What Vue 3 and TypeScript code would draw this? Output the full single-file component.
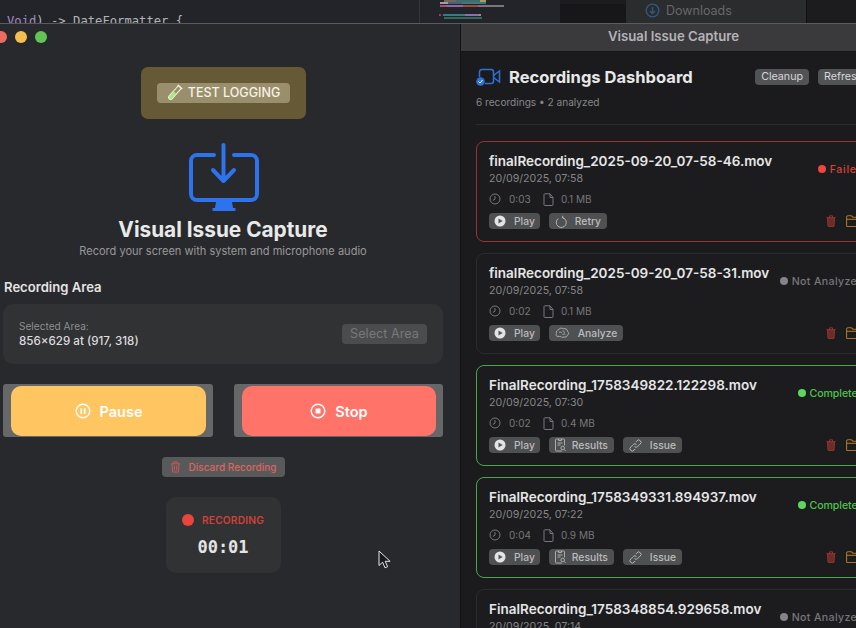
<script setup lang="ts">
interface Recording {
  name: string
  date: string
  duration: string
  size: string
  status: 'failed' | 'none' | 'done'
  statusText: string
  actions: { kind: string; label: string }[]
}

const play = { kind: 'play', label: 'Play' }
const results = { kind: 'results', label: 'Results' }
const issue = { kind: 'issue', label: 'Issue' }

const recordings: Recording[] = [
  {
    name: 'finalRecording_2025-09-20_07-58-46.mov',
    date: '20/09/2025, 07:58',
    duration: '0:03',
    size: '0.1 MB',
    status: 'failed',
    statusText: 'Failed',
    actions: [play, { kind: 'retry', label: 'Retry' }],
  },
  {
    name: 'finalRecording_2025-09-20_07-58-31.mov',
    date: '20/09/2025, 07:58',
    duration: '0:02',
    size: '0.1 MB',
    status: 'none',
    statusText: 'Not Analyzed',
    actions: [play, { kind: 'analyze', label: 'Analyze' }],
  },
  {
    name: 'FinalRecording_1758349822.122298.mov',
    date: '20/09/2025, 07:30',
    duration: '0:02',
    size: '0.4 MB',
    status: 'done',
    statusText: 'Completed',
    actions: [play, results, issue],
  },
  {
    name: 'FinalRecording_1758349331.894937.mov',
    date: '20/09/2025, 07:22',
    duration: '0:04',
    size: '0.9 MB',
    status: 'done',
    statusText: 'Completed',
    actions: [play, results, issue],
  },
  {
    name: 'FinalRecording_1758348854.929658.mov',
    date: '20/09/2025, 07:14',
    duration: '0:03',
    size: '0.5 MB',
    status: 'none',
    statusText: 'Not Analyzed',
    actions: [play, { kind: 'analyze', label: 'Analyze' }],
  },
]

// minimap lines in the window behind: x, y, width, colour
const minimap = [
  [24, 0, 12, '#6d6a5c'], [36, 0, 24, '#3f6e6a'], [60, 0, 6, '#a89a60'],
  [20, 2, 8, '#a0a0a0'], [28, 2, 14, '#5a5a70'], [42, 2, 24, '#3f7a78'],
  [20, 5, 7, '#b04a70'], [27, 5, 16, '#8a6ab0'], [43, 5, 15, '#a04848'], [58, 5, 26, '#77777a'],
  [19, 14, 2, '#a03a60'], [23, 14, 22, '#3a7a80'], [45, 14, 14, '#8a70b0'], [59, 14, 2, '#a09060'],
  [24, 17, 38, '#2f6a60'],
] as const
</script>

<template>
  <div class="stage">
    <!-- window behind -->
    <div class="behind">
      <div class="code"><span class="kw">Void</span>) -&gt; DateFormatter {</div>
      <svg class="minimap" width="140" height="23" viewBox="0 0 140 23">
        <rect v-for="(m, i) in minimap" :key="i" :x="m[0]" :y="m[1]" :width="m[2]" height="2" :fill="m[3]" />
      </svg>
      <div class="behind-dark"></div>
      <div class="downloads">
        <svg width="15" height="15" viewBox="0 0 15 15" fill="none" stroke="#2f5a86" stroke-width="1.3">
          <circle cx="7.5" cy="7.5" r="6.3" />
          <path d="M7.5 4v6.5M5 8l2.500 2.500L10 8" />
        </svg>
        <span>Downloads</span>
      </div>
    </div>

    <div class="windows">
      <!-- recorder window -->
      <section class="recorder">
        <div class="lights">
          <i class="red"></i><i class="yellow"></i><i class="green"></i>
        </div>

        <div class="test-wrap">
          <div class="test-btn">
            <svg width="17" height="18" viewBox="0 0 17 18" fill="none">
              <g transform="rotate(42 8.5 9)">
                <rect x="6.900" y="8" width="3.200" height="9" rx="1.600" fill="#a6ec74" />
                <path d="M6.500 1v14a2 2 0 0 0 4 0V1" stroke="#f2f2e2" stroke-width="1" />
                <path d="M5.500 .8h6" stroke="#f6f6ea" stroke-width="1.400" />
              </g>
            </svg>
            <span>TEST LOGGING</span>
          </div>
        </div>

        <svg class="hero-icon" width="70" height="70" viewBox="0 0 70 70" fill="none" stroke="#2d73ee" stroke-width="4" stroke-linecap="round" stroke-linejoin="round">
          <path d="M25 12H8a6 6 0 0 0-6 6v33a6 6 0 0 0 6 6h54a6 6 0 0 0 6-6V18a6 6 0 0 0-6-6H45" />
          <path d="M34.5 2v36M24 27l10.5 11L45 27" />
          <path d="M27 59h16l1 6h2.500v3h-23v-3H26z" fill="#2d73ee" stroke="none" />
        </svg>

        <h1 class="app-title">Visual Issue Capture</h1>
        <p class="app-sub">Record your screen with system and microphone audio</p>

        <h2 class="area-label">Recording Area</h2>
        <div class="area-card">
          <div>
            <div class="area-key">Selected Area:</div>
            <div class="area-val">856×629 at (917, 318)</div>
          </div>
          <div class="select-btn">Select Area</div>
        </div>

        <div class="controls">
          <div class="ctrl">
            <div class="ctrl-inner pause">
              <svg width="16" height="16" viewBox="0 0 16 16" fill="none" stroke="#fff" stroke-width="1.4">
                <circle cx="8" cy="8" r="6.8" />
                <path d="M6.300 5.300v5.400M9.700 5.300v5.400" stroke-width="1.700" />
              </svg>
              <span>Pause</span>
            </div>
          </div>
          <div class="ctrl">
            <div class="ctrl-inner stop">
              <svg width="16" height="16" viewBox="0 0 16 16" fill="none" stroke="#fff" stroke-width="1.4">
                <circle cx="8" cy="8" r="6.8" />
                <rect x="5.500" y="5.500" width="5" height="5" rx="0.8" fill="#fff" stroke="none" />
              </svg>
              <span>Stop</span>
            </div>
          </div>
        </div>

        <div class="discard">
          <svg width="11" height="12" viewBox="0 0 11 12" fill="none" stroke="#c65a56" stroke-width="1">
            <path d="M1 2.800h9M3.800 2.500V1h3.400v1.500M2 3l.6 8h5.800L9 3M4.300 4.500v5M6.700 4.500v5" />
          </svg>
          <span>Discard Recording</span>
        </div>

        <div class="rec-card">
          <div class="rec-row"><i class="rec-dot"></i><span>RECORDING</span></div>
          <div class="rec-time">00:01</div>
        </div>

        <svg class="cursor" width="14" height="19" viewBox="0 0 14 19">
          <path d="M1 1v14.500l3.600-3.300 2.400 5.600 2.600-1.100-2.400-5.400h4.900z" fill="#1a1a1c" stroke="#e8e8e8" stroke-width="1" />
        </svg>
      </section>

      <!-- dashboard window -->
      <section class="board">
        <div class="board-bar">Visual Issue Capture</div>
        <div class="dash">
          <div class="dash-head">
            <svg width="25" height="19" viewBox="0 0 25 19" fill="none" stroke="#2f6fd8" stroke-width="1.500">
              <path d="M3.500 9V4a2.500 2.500 0 0 1 2.500-2.500h9A2.500 2.500 0 0 1 17.500 4v9a2.500 2.500 0 0 1-2.500 2.500H9" />
              <path d="m17.500 7.500 6-4.500v11l-6-4.500" />
              <circle cx="4.500" cy="13.500" r="4.300" fill="#2f6fd8" stroke="none" />
              <path d="m2.500 13.500 1.500 1.500 2.600-3" stroke="#fff" stroke-width="1" />
            </svg>
            <h2>Recordings Dashboard</h2>
            <div class="head-btn first">Cleanup</div>
            <div class="head-btn">Refresh</div>
          </div>
          <p class="dash-sub">6 recordings • 2 analyzed</p>
          <div class="divider"></div>

          <div class="list">
            <article v-for="r in recordings" :key="r.name" class="rec" :class="r.status">
              <div class="rec-head">
                <div>
                  <div class="rec-name">{{ r.name }}</div>
                  <div class="rec-date">{{ r.date }}</div>
                </div>
                <div class="status"><i></i><span>{{ r.statusText }}</span></div>
              </div>
              <div class="meta">
                <svg width="12" height="12" viewBox="0 0 12 12" fill="none" stroke="#77777a" stroke-width="1">
                  <circle cx="6" cy="6" r="5" />
                  <path d="M6 3v3.200L3.800 7.400" />
                </svg>
                <span class="meta-dur">{{ r.duration }}</span>
                <svg width="11" height="13" viewBox="0 0 11 13" fill="none" stroke="#77777a" stroke-width="1">
                  <path d="M1 1.500v10.200a.8.800 0 0 0 .8.800h7.400a.8.800 0 0 0 .8-.8V4.500L7 .8H1.700a.7.700 0 0 0-.7.700zM7 .8v3.700h3" />
                </svg>
                <span class="meta-size">{{ r.size }}</span>
              </div>
              <div class="actions">
                <div v-for="a in r.actions" :key="a.kind" class="act" :class="a.kind">
                  <svg v-if="a.kind === 'play'" width="12" height="12" viewBox="0 0 12 12">
                    <circle cx="6" cy="6" r="5.500" fill="#e4e4e4" />
                    <path d="M4.500 3.400v5.200L8.700 6z" fill="#55565a" />
                  </svg>
                  <svg v-else-if="a.kind === 'retry'" width="12" height="13" viewBox="0 0 12 13" fill="none" stroke="#b5b5b7" stroke-width="1">
                    <path d="M3.200 3.500a5 5 0 1 0 4.300-.9" />
                    <path d="M7.800 .8 7.500 2.700l1.800 1" />
                  </svg>
                  <svg v-else-if="a.kind === 'analyze'" width="15" height="12" viewBox="0 0 15 12" fill="none" stroke="#b5b5b7" stroke-width="0.900">
                    <path d="M3 9.500C1 9.500.5 7.500 1.500 6.500.5 4.800 2 3 3.500 3 4 1 7 .6 8.500 1.800 10.500 1 12.700 2.500 12.500 4.300c1.600.9 1.500 3.400-.2 4-.2 1.500-2 2.400-3.300 1.500-1 1-2.700.7-3.300-.4-.9.300-2 .2-2.700-.4z" />
                    <path d="M4 5.500c1-.8 2.500-.4 3 .7M8 3.500c0 1.200 1 1.800 2 1.600M7.500 8c.5-1 1.700-1.300 2.800-.8" />
                  </svg>
                  <svg v-else-if="a.kind === 'results'" width="11" height="14" viewBox="0 0 11 14" fill="none" stroke="#b5b5b7" stroke-width="0.900">
                    <path d="M7 13H1.500a1 1 0 0 1-1-1V2a1 1 0 0 1 1-1h7a1 1 0 0 1 1 1v5.500" />
                    <path d="M3.500 1v1.500h3V1M2.500 5h5M2.500 7h3" />
                    <circle cx="7.700" cy="10" r="1.800" />
                    <path d="m9 11.400 1.500 1.500" />
                  </svg>
                  <svg v-else width="13" height="13" viewBox="0 0 13 13" fill="none" stroke="#b5b5b7" stroke-width="1">
                    <path d="M5.500 7.500a2.200 2.200 0 0 0 3.200 0l2.300-2.300A2.300 2.300 0 1 0 7.800 2l-1 1" />
                    <path d="M7.500 5.500a2.200 2.200 0 0 0-3.200 0L2 7.800A2.300 2.300 0 1 0 5.200 11l1-1" />
                  </svg>
                  <span>{{ a.label }}</span>
                </div>
                <div class="tools">
                  <svg width="10" height="12" viewBox="0 0 10 12" fill="none" stroke="#8c3630" stroke-width="1">
                    <path d="M.5 2.500h9M3.500 2.300V.8h3v1.500" />
                    <path d="M1.500 2.800 2 11.400h6l.5-8.600z" fill="#6e2c28" />
                  </svg>
                  <svg width="16" height="12" viewBox="0 0 16 12" fill="none" stroke="#a8752a" stroke-width="1.100">
                    <path d="M.6 2a1.200 1.200 0 0 1 1.200-1.200h3.700l1.300 1.400h7.400a1.200 1.200 0 0 1 1.200 1.200v7a1.200 1.200 0 0 1-1.200 1.200H1.800A1.200 1.200 0 0 1 .6 10.400z" />
                    <path d="M.6 4.300h14.800" />
                  </svg>
                </div>
              </div>
            </article>
          </div>
        </div>
      </section>
    </div>
  </div>
</template>

<style scoped>
.stage {
  width: 856px;
  height: 628px;
  display: flex;
  flex-direction: column;
  overflow: hidden;
  font-family: Inter, "Liberation Sans", sans-serif;
  background: #28292c;
}

.behind {
  height: 23px;
  flex-shrink: 0;
  display: flex;
  background: #1c1c1f;
  overflow: hidden;
}

.code {
  width: 420px;
  flex-shrink: 0;
  box-sizing: border-box;
  padding: 13px 0 0 7px;
  font-family: "DejaVu Sans Mono", monospace;
  font-size: 12.2px;
  line-height: 16px;
  color: #b4b4b6;
  background: #222429;
  border-right: 1px solid #34363a;
}

.kw {
  color: #a58cc0;
}

.minimap {
  width: 140px;
  flex-shrink: 0;
  background: #222429;
}

.behind-dark {
  width: 66px;
  flex-shrink: 0;
  background: #17171a;
  border-top: 4px solid #1c1c1f;
  box-sizing: border-box;
}

.downloads {
  width: 181px;
  flex-shrink: 0;
  display: flex;
  align-items: center;
  gap: 6px;
  box-sizing: border-box;
  padding: 0 0 3px 19px;
  background: #2b2c2e;
  border-right: 1px solid #101012;
  color: #67686a;
  font-size: 12.5px;
}

.windows {
  flex: 1;
  min-height: 0;
  display: flex;
  border-top: 1px solid #5a5b5d;
}

.recorder {
  position: relative;
  width: 460px;
  flex-shrink: 0;
  box-sizing: border-box;
  padding: 0 17px 0 3px;
  background: #28292c;
  display: flex;
  flex-direction: column;
  align-items: center;
}

.lights {
  align-self: flex-start;
  height: 26px;
  margin-left: -8px;
  display: flex;
  align-items: center;
  gap: 8px;
}

.lights i {
  width: 12px;
  height: 12px;
  border-radius: 50%;
}

.red { background: #ee6a5f; }
.yellow { background: #f4bf4f; }
.green { background: #61c454; }

.test-wrap {
  margin-top: 17px;
  width: 165px;
  height: 52px;
  border-radius: 7px;
  background: #665a36;
  display: flex;
  align-items: center;
  justify-content: center;
}

.test-btn {
  width: 133px;
  height: 20px;
  border-radius: 4px;
  background: #9a8f6c;
  display: flex;
  align-items: center;
  justify-content: center;
  gap: 5px;
  font-size: 12.5px;
  line-height: 18px;
  font-weight: 500;
  color: #f7f3e4;
}

.hero-icon {
  margin: 24px 0 0 1px;
  flex-shrink: 0;
}

.app-title {
  margin: 4px 0 0;
  font-size: 20.8px;
  line-height: 26px;
  font-weight: 700;
  color: #e9e9ea;
}

.app-sub {
  margin: 1px 0 0;
  font-size: 11.05px;
  line-height: 14px;
  color: #98989b;
}

.area-label {
  align-self: flex-start;
  margin: 21px 0 0 1px;
  font-size: 13.1px;
  line-height: 16px;
  font-weight: 600;
  color: #e4e4e5;
}

.area-card {
  margin-top: 9px;
  align-self: stretch;
  height: 60px;
  box-sizing: border-box;
  padding: 0 16px;
  border-radius: 10px;
  background: #303234;
  display: flex;
  align-items: center;
  justify-content: space-between;
}

.area-key {
  font-size: 10.1px;
  line-height: 14px;
  color: #8d8e90;
}

.area-val {
  margin-top: 1px;
  font-size: 11.6px;
  line-height: 15px;
  font-weight: 500;
  color: #dcdcdd;
}

.select-btn {
  width: 85px;
  height: 20px;
  border-radius: 4px;
  background: #4a4c4e;
  color: #77787b;
  font-size: 12.7px;
  line-height: 20px;
  text-align: center;
}

.controls {
  margin-top: 20px;
  align-self: stretch;
  display: grid;
  grid-template-columns: 210px 209px;
  justify-content: space-between;
}

.ctrl {
  height: 53px;
  box-sizing: border-box;
  padding: 2px 7px 1px 8px;
  border-radius: 3px;
  background: #666769;
}

.ctrl-inner {
  height: 100%;
  border-radius: 10px;
  display: flex;
  align-items: center;
  justify-content: center;
  gap: 9px;
  font-size: 14.5px;
  font-weight: 600;
  color: #fff;
}

.pause { background: #fec561; }
.stop { background: #ff7369; }

.discard {
  margin-top: 20px;
  width: 123px;
  height: 20px;
  border-radius: 4px;
  background: #58595b;
  display: flex;
  align-items: center;
  justify-content: center;
  gap: 8px;
  font-size: 10px;
  font-weight: 500;
  color: #dc6560;
}

.rec-card {
  margin-top: 20px;
  width: 115px;
  height: 76px;
  border-radius: 10px;
  background: #313234;
  display: flex;
  flex-direction: column;
  align-items: center;
}

.rec-row {
  margin-top: 15px;
  height: 16px;
  display: flex;
  align-items: center;
  gap: 8px;
  font-size: 10.2px;
  font-weight: 600;
  letter-spacing: 0.2px;
  color: #cf4139;
}

.rec-dot {
  width: 12px;
  height: 12px;
  border-radius: 50%;
  background: #e8453c;
}

.rec-time {
  margin-top: 8px;
  font-family: "DejaVu Sans Mono", monospace;
  font-size: 17px;
  line-height: 22px;
  font-weight: 700;
  color: #e4e4e5;
}

.cursor {
  position: absolute;
  left: 378px;
  top: 526px;
}

.board {
  width: 396px;
  flex-shrink: 0;
  overflow: hidden;
  background: #1b1b1d;
  border-left: 1px solid #131315;
  box-sizing: border-box;
}

.board-bar {
  height: 28px;
  box-sizing: border-box;
  padding-left: 30px;
  background: #3a3a3c;
  border-bottom: 1px solid #151517;
  text-align: center;
  font-size: 13.2px;
  line-height: 25px;
  font-weight: 600;
  color: #b4b4b6;
}

.dash {
  width: 420px;
  box-sizing: border-box;
  padding: 16px 4px 0 15px;
}

.dash-head {
  height: 18px;
  padding-right: 8px;
  display: flex;
  align-items: center;
}

.dash-head h2 {
  margin: 0 0 0 8px;
  font-size: 16.55px;
  font-weight: 700;
  color: #e8e8e9;
  white-space: nowrap;
}

.head-btn {
  height: 16px;
  padding: 0 6px;
  border-radius: 4px;
  background: #525355;
  font-size: 10.7px;
  line-height: 16px;
  color: #d8d8d9;
  white-space: nowrap;
}

.head-btn.first {
  margin-left: auto;
  margin-right: 9px;
}

.dash-sub {
  margin: 9px 0 0;
  font-size: 10.1px;
  line-height: 14px;
  color: #87878a;
}

.divider {
  margin-top: 15px;
  height: 1px;
  background: #2b2b2d;
}

.list {
  margin-top: 16px;
  display: flex;
  flex-direction: column;
  gap: 11px;
}

.rec {
  height: 101px;
  flex-shrink: 0;
  box-sizing: border-box;
  padding: 11px 12px;
  border: 1px solid #2c2c2e;
  border-radius: 8px;
  background: #1c1c1e;
}

.rec.failed { border-color: #96352f; }
.rec.done { border-color: #4aa64a; }

.rec-head {
  display: flex;
  justify-content: space-between;
  align-items: center;
}

.rec-name {
  font-size: 13.5px;
  line-height: 16px;
  font-weight: 600;
  color: #e6e6e7;
  white-space: nowrap;
}

.rec-date {
  margin-top: 3px;
  font-size: 10.6px;
  line-height: 13px;
  color: #86868a;
}

.status {
  display: flex;
  align-items: center;
  gap: 4px;
  font-size: 10.6px;
  font-weight: 500;
  white-space: nowrap;
}

.status i {
  width: 8px;
  height: 8px;
  border-radius: 50%;
}

.failed .status { color: #d8433b; letter-spacing: 0.7px; }
.failed .status i { background: #f0463e; }
.none .status { color: #77777a; letter-spacing: 0.35px; }
.none .status i { background: #848487; }
.done .status { color: #4fc24f; letter-spacing: -0.1px; }
.done .status i { background: #5ed65e; }

.meta {
  margin-top: 7px;
  height: 14px;
  display: flex;
  align-items: center;
  font-size: 10px;
  color: #77777a;
}

.meta-dur {
  margin-left: 8px;
  width: 34px;
}

.meta-size {
  margin-left: 7px;
}

.actions {
  margin-top: 7px;
  height: 16px;
  display: flex;
  align-items: center;
  gap: 9px;
}

.act {
  height: 16px;
  box-sizing: border-box;
  padding: 0 6px;
  border-radius: 4px;
  background: #4f5052;
  display: flex;
  align-items: center;
  gap: 8px;
  font-size: 10.3px;
  font-weight: 500;
  color: #bcbcbe;
}

.act.play {
  padding: 0 5px;
}

.act.results {
  gap: 6px;
}

.tools {
  margin-left: auto;
  margin-right: 2px;
  display: flex;
  align-items: center;
  gap: 10px;
}
</style>

<style>
html,
body {
  background: #28292c;
}
</style>
